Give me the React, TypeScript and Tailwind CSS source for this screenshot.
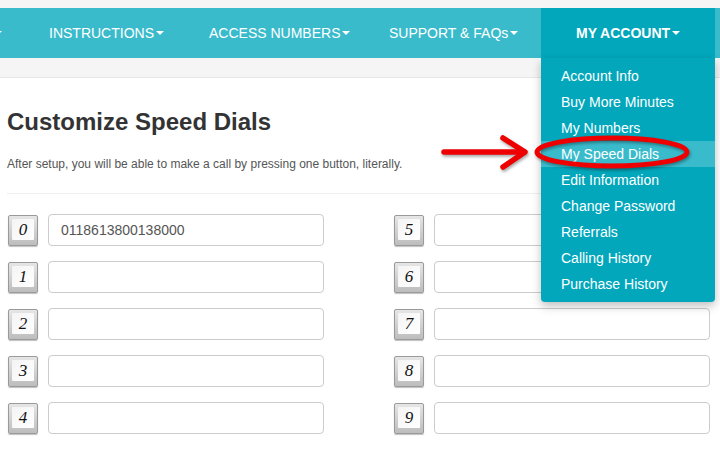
import React from 'react'

const navItems = [
  { label: 'INSTRUCTIONS', width: 'w-[160px]' },
  { label: 'ACCESS NUMBERS', width: 'w-[180px]' },
  { label: 'SUPPORT & FAQs', width: 'w-[152px]' },
]

const accountMenu = [
  'Account Info',
  'Buy More Minutes',
  'My Numbers',
  'My Speed Dials',
  'Edit Information',
  'Change Password',
  'Referrals',
  'Calling History',
  'Purchase History',
]

const dials: Record<number, string> = { 0: '0118613800138000' }

function Caret() {
  return <span className="ml-[2px] inline-block h-0 w-0 border-x-[4px] border-t-[4px] border-x-transparent border-t-white align-middle" />
}

function DialKey({ digit }: { digit: number }) {
  return (
    <div className="flex h-[31px] w-[30px] shrink-0 items-start justify-center rounded-[2px] border border-[#9a9a9a] bg-gradient-to-b from-[#e6e6e6] to-[#bdbdbd] pt-[3px] shadow-[0_1px_1px_rgba(0,0,0,0.25)]">
      <div className="flex h-[21px] w-[22px] items-center justify-center rounded-[1px] bg-gradient-to-br from-[#f4f4f4] to-[#ffffff] font-['Liberation_Serif',serif] text-[17px] italic leading-none text-[#111]">
        {digit}
      </div>
    </div>
  )
}

function DialRow({ digit }: { digit: number }) {
  return (
    <div className="flex h-[32px] items-center gap-[10px]">
      <DialKey digit={digit} />
      <input
        readOnly
        value={dials[digit] ?? ''}
        className="h-[32px] w-[276px] rounded-[4px] border border-[#cccccc] bg-white px-[12px] font-['Liberation_Sans',sans-serif] text-[14px] text-[#555] outline-none"
      />
    </div>
  )
}

export default function App() {
  return (
    <div className="relative h-[454px] w-[720px] overflow-hidden bg-white font-['Liberation_Sans',Arial,sans-serif]">
      <div className="h-[8px] bg-[#f5f5f5]" />

      <nav className="flex h-[50px] bg-[#3abbcc] text-[14px] text-white">
        <div className="flex w-[49px] items-center">
          <span className="-ml-[6px] inline-block h-0 w-0 border-x-[4px] border-t-[4px] border-x-transparent border-t-white" />
        </div>
        {navItems.map(item => (
          <div key={item.label} className={`flex items-center ${item.width}`}>
            <span>{item.label}</span>
            <Caret />
          </div>
        ))}
        <div className="flex w-[174px] items-center bg-[#02a7bc] pl-[35px] font-bold">
          <span>MY ACCOUNT</span>
          <Caret />
        </div>
      </nav>

      <div className="h-[20px] border-b border-[#e6e6e6] bg-[#f5f5f5]" />

      <main className="px-[7px] text-[#333]">
        <h1 className="mt-[30px] text-[24px] font-bold leading-[28px]">Customize Speed Dials</h1>
        <p className="mt-[20px] text-[12px] leading-[16px] text-[#555]">
          After setup, you will be able to make a call by pressing one button, literally.
        </p>
        <hr className="mt-[21px] border-[#eeeeee]" />

        <div className="mt-[20px] flex pl-[1px]">
          <div className="flex w-[386px] flex-col gap-[15px]">
            {[0, 1, 2, 3, 4].map(d => <DialRow key={d} digit={d} />)}
          </div>
          <div className="flex flex-col gap-[15px]">
            {[5, 6, 7, 8, 9].map(d => <DialRow key={d} digit={d} />)}
          </div>
        </div>
      </main>

      <ul className="absolute left-[541px] top-[58px] w-[174px] rounded-b-[4px] bg-[#02a7bc] pb-[5px] pt-[5px] text-[14px] text-white shadow-[0_4px_10px_rgba(0,0,0,0.25)]">
        {accountMenu.map(label => (
          <li
            key={label}
            className={`h-[26px] pl-[20px] leading-[26px] ${label === 'My Speed Dials' ? 'bg-[#3abbcc]' : ''}`}
          >
            {label}
          </li>
        ))}
      </ul>

      <svg className="pointer-events-none absolute left-0 top-0" width="720" height="454" viewBox="0 0 720 454">
        <g stroke="#ee0000" fill="none" strokeLinecap="round" strokeLinejoin="round" style={{ filter: 'drop-shadow(1px 2px 1.5px rgba(0,0,0,0.35))' }}>
          <line x1="444" y1="152" x2="524" y2="152" strokeWidth="5.5" />
          <polyline points="503,138 525,152 503,167" strokeWidth="5.5" />
          <ellipse cx="612" cy="152" rx="75" ry="14" strokeWidth="5" />
        </g>
      </svg>
    </div>
  )
}
